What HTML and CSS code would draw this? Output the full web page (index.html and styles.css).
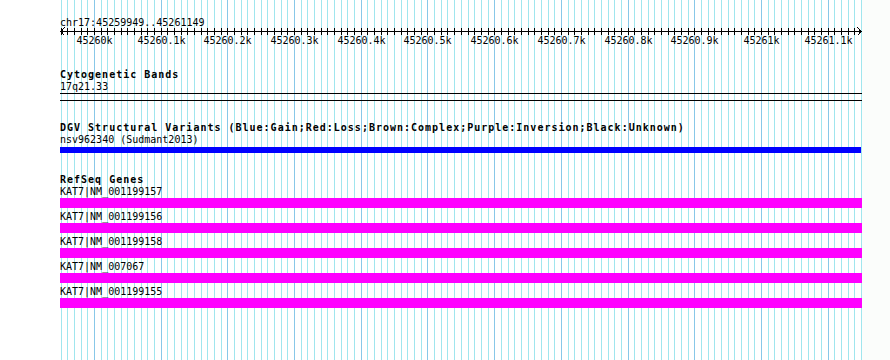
FILE: index.html
```html
<!DOCTYPE html>
<html lang="en">
<head>
  <meta charset="UTF-8">
  <title>chr17:45259949..45261149</title>
  <link rel="stylesheet" href="styles.css">
</head>
<body>
  <div class="view">
    <svg class="grid" id="grid" width="890" height="360"></svg>

    <div class="tracks">
      <svg class="ruler" id="ruler" width="802" height="48"></svg>

      <div class="track">
        <div class="track-title">Cytogenetic Bands</div>
        <div class="feature-label">17q21.33</div>
        <div class="band"></div>
      </div>

      <div class="track track-dgv">
        <div class="track-title">DGV Structural Variants (Blue:Gain;Red:Loss;Brown:Complex;Purple:Inversion;Black:Unknown)</div>
        <div class="feature-label">nsv962340 (Sudmant2013)</div>
        <div class="bar-dgv"></div>
      </div>

      <div class="track">
        <div class="track-title">RefSeq Genes</div>
        <div class="gene">
          <div class="feature-label">KAT7|NM_001199157</div>
          <div class="bar-gene"></div>
        </div>
        <div class="gene">
          <div class="feature-label">KAT7|NM_001199156</div>
          <div class="bar-gene"></div>
        </div>
        <div class="gene">
          <div class="feature-label">KAT7|NM_001199158</div>
          <div class="bar-gene"></div>
        </div>
        <div class="gene">
          <div class="feature-label">KAT7|NM_007067</div>
          <div class="bar-gene"></div>
        </div>
        <div class="gene">
          <div class="feature-label">KAT7|NM_001199155</div>
          <div class="bar-gene"></div>
        </div>
      </div>
    </div>
  </div>

  <script>
    const NS = "http://www.w3.org/2000/svg";
    const start = 45259949, end = 45261149;
    const left = 60, span = 801;
    const scale = span / (end - start + 1);

    function px(bp) {
      return Math.round(left + (bp - start) * scale);
    }

    function add(parent, tag, attrs, text) {
      const el = document.createElementNS(NS, tag);
      for (const k in attrs) el.setAttribute(k, attrs[k]);
      if (text) el.textContent = text;
      parent.appendChild(el);
      return el;
    }

    // grid lines behind the tracks
    const grid = document.getElementById("grid");
    add(grid, "rect", { x: 862, y: 0, width: 28, height: 360, fill: "#fbfdfb" });
    for (let bp = 45259950; bp <= 45261150; bp += 10) {
      const major = bp % 100 === 0;
      add(grid, "rect", {
        x: px(bp), y: 0, width: 1, height: 360,
        fill: major ? "#88c8e8" : "#a0e6ee"
      });
    }

    // ruler
    const ruler = document.getElementById("ruler");
    add(ruler, "text", { x: 0, y: 26, class: "locus" }, "chr17:" + start + ".." + end);
    add(ruler, "rect", { x: 0, y: 31, width: 802, height: 1, fill: "#000" });
    add(ruler, "path", { d: "M4.5 27.5 L1 31.5 L4.5 35.5", class: "arrow" });
    add(ruler, "path", { d: "M797.5 27.5 L801 31.5 L797.5 35.5", class: "arrow" });
    for (let bp = 45259950; bp <= 45261140; bp += 10) {
      const x = px(bp) - left;
      add(ruler, "rect", { x: x, y: 28, width: 1, height: 7, fill: "#000" });
      if (bp % 100 === 0) {
        const kb = parseFloat((bp / 1000).toFixed(1));
        add(ruler, "text", { x: x + 0.5, y: 44, class: "tick-label" }, kb + "k");
      }
    }
  </script>
</body>
</html>
```

FILE: styles.css
```css
body {
  margin: 0;
  font-family: "DejaVu Sans Mono", "Liberation Mono", monospace;
  font-size: 10px;
  line-height: 12px;
  color: #000;
  background: #fff;
}

.view {
  position: relative;
  width: 890px;
  height: 360px;
  overflow: hidden;
  background: #fff;
}

.grid {
  position: absolute;
  top: 0;
  left: 0;
  shape-rendering: crispEdges;
}

.tracks {
  position: relative;
  width: 802px;
  padding-left: 60px;
}

.ruler {
  display: block;
  shape-rendering: crispEdges;
}

.ruler text {
  font-family: "DejaVu Sans Mono", "Liberation Mono", monospace;
  font-size: 10px;
  fill: #000;
}

.ruler .tick-label {
  text-anchor: middle;
}

.ruler .arrow {
  fill: none;
  stroke: #000;
  stroke-width: 1;
}

.track {
  margin-top: 21px;
}

.track-title,
.feature-label {
  white-space: nowrap;
}

.track-title {
  font-weight: bold;
  letter-spacing: 1px;
}

.band {
  height: 6px;
  border-top: 1px solid #000;
  border-bottom: 1px solid #000;
}

.bar-dgv {
  width: 801px;
  height: 6px;
  margin: 1px 0;
  background: #0000ff;
}

.gene {
  margin-bottom: 3px;
}

.bar-gene {
  height: 10px;
  background: #ff00ff;
}
```
